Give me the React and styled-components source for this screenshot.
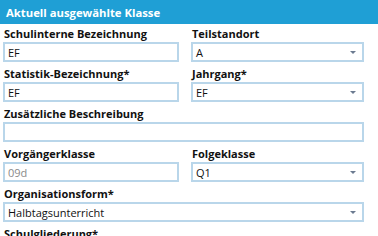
import React from 'react';
import styled, { createGlobalStyle } from 'styled-components';

const Global = createGlobalStyle`
  html, body { margin: 0; padding: 0; background: #fff; }
  body { font-family: "Open Sans", "Noto Sans", sans-serif; overflow: hidden; }
`;

const Panel = styled.div`
  width: 378px;
  height: 236px;
  overflow: hidden;
  background: #fff;
`;

const Header = styled.div`
  height: 24px;
  background: #1f9fd5;
  color: #fff;
  font-weight: 700;
  font-size: 11.3px;
  display: flex;
  align-items: center;
  padding-left: 6px;
`;

const Grid = styled.div`
  display: grid;
  grid-template-columns: 176px 173px;
  column-gap: 12px;
  padding: 2px 0 0 3px;
`;

const Field = styled.div`
  grid-column: ${p => (p.$wide ? '1 / 3' : 'auto')};
  display: flex;
  flex-direction: column;
  height: 40px;
`;

const Label = styled.label`
  font-size: 11px;
  font-weight: 700;
  color: #111;
  line-height: 16px;
  padding-left: 1px;
`;

const Box = styled.div`
  height: 20px;
  box-sizing: border-box;
  border: 2px solid #b9d6ea;
  display: flex;
  align-items: center;
  padding: 0 3px;
  font-size: 11px;
  color: ${p => (p.$muted ? '#8a8a8a' : '#111')};
  position: relative;
`;

const Arrow = styled.span`
  position: absolute;
  right: 6px;
  top: 7px;
  width: 0;
  height: 0;
  border-left: 3px solid transparent;
  border-right: 3px solid transparent;
  border-top: 3px solid #6b7a90;
`;

const Input = ({ value, muted }) => <Box $muted={muted}>{value}</Box>;
const Select = ({ value }) => (
  <Box>
    {value}
    <Arrow />
  </Box>
);

export default function App() {
  return (
    <Panel>
      <Global />
      <Header>Aktuell ausgewählte Klasse</Header>
      <Grid>
        <Field>
          <Label>Schulinterne Bezeichnung</Label>
          <Input value="EF" />
        </Field>
        <Field>
          <Label>Teilstandort</Label>
          <Select value="A" />
        </Field>
        <Field>
          <Label>Statistik-Bezeichnung*</Label>
          <Input value="EF" />
        </Field>
        <Field>
          <Label>Jahrgang*</Label>
          <Select value="EF" />
        </Field>
        <Field $wide>
          <Label>Zusätzliche Beschreibung</Label>
          <Input value="" />
        </Field>
        <Field>
          <Label>Vorgängerklasse</Label>
          <Input value="09d" muted />
        </Field>
        <Field>
          <Label>Folgeklasse</Label>
          <Select value="Q1" />
        </Field>
        <Field $wide>
          <Label>Organisationsform*</Label>
          <Select value="Halbtagsunterricht" />
        </Field>
        <Field $wide>
          <Label>Schulgliederung*</Label>
          <Select value="" />
        </Field>
      </Grid>
    </Panel>
  );
}
